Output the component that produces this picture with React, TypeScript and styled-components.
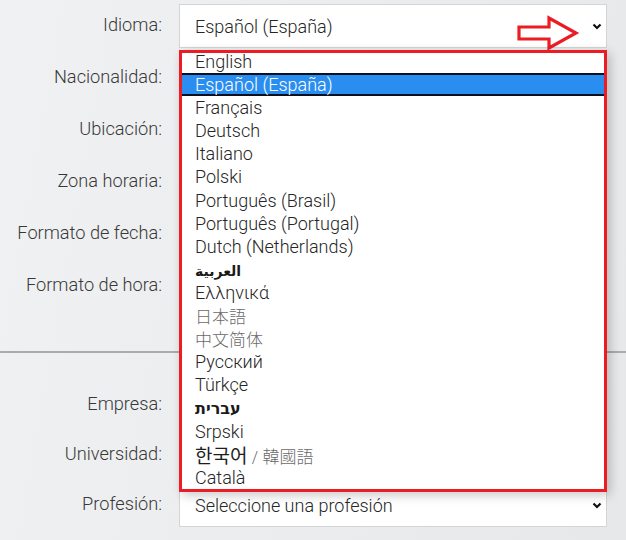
import React from 'react';
import styled, { createGlobalStyle } from 'styled-components';

const GlobalStyle = createGlobalStyle`
  html, body {
    margin: 0;
    padding: 0;
  }
  body {
    font-family: Roboto, 'Liberation Sans', Arial, sans-serif;
    background: linear-gradient(100deg, #f0f1f2 0%, #eaeced 55%, #e6e8e9 100%);
    min-height: 540px;
    overflow: hidden;
  }
`;

const Page = styled.div`
  position: relative;
  width: 626px;
  height: 540px;
  overflow: hidden;
`;

const Section = styled.div<{ gap: number }>`
  display: flex;
  flex-direction: column;
  gap: ${(p) => p.gap}px;
`;

const Row = styled.div`
  display: grid;
  grid-template-columns: 162px 428px;
  column-gap: 17px;
  align-items: center;
  height: 44px;
`;

const Label = styled.label`
  text-align: right;
  font-size: 18.2px;
  font-weight: 300;
  color: #383838;
  padding-bottom: 4px;
  white-space: nowrap;
`;

const Select = styled.div`
  position: relative;
  height: 44px;
  box-sizing: border-box;
  background: #fff;
  border: 1px solid #d2d4d5;
  display: flex;
  align-items: center;
  padding: 0 0 0 15px;
  font-size: 18px;
  font-weight: 300;
  color: #262626;
`;

const Chevron = styled.svg`
  position: absolute;
  right: 4px;
  top: 50%;
  margin-top: -3px;
`;

const Divider = styled.hr`
  margin: 43px 0 30px;
  border: 0;
  border-top: 2px solid #a9abac;
`;

const ArrowMark = styled.svg`
  position: absolute;
  left: 337px;
  top: 6px;
`;

const Dropdown = styled.div`
  position: absolute;
  left: 179px;
  top: 50px;
  width: 428px;
  height: 442px;
  box-sizing: border-box;
  border: 3px solid #ec1c24;
  background: #fff;
  overflow: hidden;
  box-shadow: 3px 3px 10px rgba(0, 0, 0, 0.22);
`;

const List = styled.ul`
  list-style: none;
  margin: -3px 0 0;
  padding: 0;
`;

const Option = styled.li<{ selected?: boolean }>`
  height: 23.1px;
  box-sizing: border-box;
  padding-left: 13px;
  font-size: 18px;
  font-weight: 300;
  white-space: nowrap;
  color: ${(p) => (p.selected ? '#fff' : '#262626')};
  background: ${(p) => (p.selected ? '#2a8df0' : 'transparent')};
  border-top: ${(p) => (p.selected ? '2px solid #0b1020' : 'none')};
  border-bottom: ${(p) => (p.selected ? '2px solid #0b1020' : 'none')};
  line-height: ${(p) => (p.selected ? '19px' : '23px')};
`;

const Bold = styled.span<{ size: number }>`
  font-family: 'DejaVu Sans', sans-serif;
  font-weight: 700;
  font-size: ${(p) => p.size}px;
  color: #1a1a1a;
`;

const Cjk = styled.span<{ dark?: boolean; size?: number }>`
  font-family: 'Noto Sans CJK JP', 'Noto Sans CJK KR', sans-serif;
  font-size: ${(p) => p.size ?? 17}px;
  color: ${(p) => (p.dark ? '#1e1e1e' : '#6a6a6a')};
  font-weight: ${(p) => (p.dark ? 400 : 300)};
`;

const Slash = styled.span`
  color: #666;
  font-size: 16px;
`;

const ChevronIcon = () => (
  <Chevron width="10" height="7" viewBox="0 0 10 7">
    <polyline points="1.5,1.5 5,5 8.5,1.5" fill="none" stroke="#111" strokeWidth="2.2" />
  </Chevron>
);

const languages: React.ReactNode[] = [
  'English',
  'Español (España)',
  'Français',
  'Deutsch',
  'Italiano',
  'Polski',
  'Português (Brasil)',
  'Português (Portugal)',
  'Dutch (Netherlands)',
  <Bold key="ar" size={14}>العربية</Bold>,
  'Ελληνικά',
  <Cjk key="ja">日本語</Cjk>,
  <Cjk key="zh">中文简体</Cjk>,
  'Русский',
  'Türkçe',
  <Bold key="he" size={16}>עברית</Bold>,
  'Srpski',
  <span key="ko">
    <Cjk dark size={19}>한국어</Cjk> <Slash>/</Slash> <Cjk>韓國語</Cjk>
  </span>,
  'Català',
];

const topFields = ['Idioma:', 'Nacionalidad:', 'Ubicación:', 'Zona horaria:', 'Formato de fecha:', 'Formato de hora:'];
const bottomFields = ['Empresa:', 'Universidad:', 'Profesión:'];

export default function App() {
  return (
    <Page>
      <GlobalStyle />
      <div style={{ paddingTop: 4 }}>
        <Section gap={8}>
          {topFields.map((f, i) => (
            <Row key={f}>
              <Label>{f}</Label>
              <Select>
                {i === 0 ? 'Español (España)' : ''}
                <ChevronIcon />
                {i === 0 && (
                  <ArrowMark width="64" height="40" viewBox="0 0 64 40">
                    <polygon
                      points="2,16 32,16 32,7 59,22 32,37 32,28 2,28"
                      fill="none"
                      stroke="#ec1c24"
                      strokeWidth="3.2"
                    />
                  </ArrowMark>
                )}
              </Select>
            </Row>
          ))}
        </Section>
        <Divider />
        <Section gap={6}>
          {bottomFields.map((f, i) => (
            <Row key={f}>
              <Label>{f}</Label>
              <Select>
                {i === 2 ? 'Seleccione una profesión' : ''}
                <ChevronIcon />
              </Select>
            </Row>
          ))}
        </Section>
      </div>
      <Dropdown>
        <List>
          {languages.map((l, i) => (
            <Option key={i} selected={i === 1}>
              {l}
            </Option>
          ))}
        </List>
      </Dropdown>
    </Page>
  );
}
